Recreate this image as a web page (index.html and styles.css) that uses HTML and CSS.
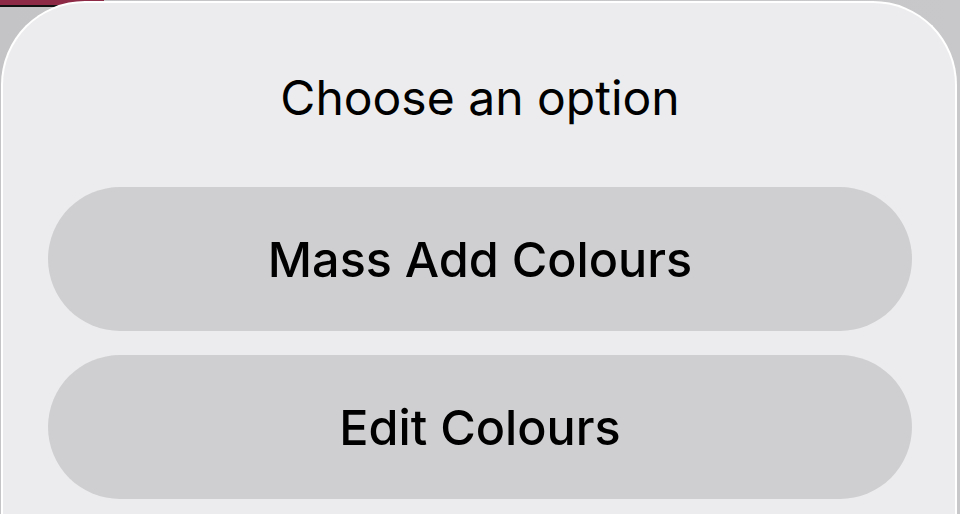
FILE: index.html
```html
<!DOCTYPE html>
<html lang="en">
<head>
<meta charset="utf-8">
<title>Choose an option</title>
<link rel="stylesheet" href="styles.css">
</head>
<body>
<div class="sheet">
  <div class="title">Choose an option</div>
  <div class="actions">
    <button class="action">Mass Add Colours</button>
    <button class="action">Edit Colours</button>
  </div>
</div>
</body>
</html>
```
FILE: styles.css
```css
html, body {
  margin: 0;
  height: 100%;
}
body {
  background-color: #c5c5c7;
  background-image:
    linear-gradient(#8d2a46, #8d2a46),
    linear-gradient(#111, #111),
    linear-gradient(90deg, #c4c4c6 0%, #c8c8ca 100%);
  background-repeat: no-repeat;
  background-size: 104px 5px, 104px 2px, 100% 100%;
  background-position: 0 0, 0 5px, 0 0;
  overflow: hidden;
  font-family: Inter, "Noto Sans", sans-serif;
  color: #000;
}
.sheet {
  box-sizing: border-box;
  margin: 1px 3px 0 1px;
  height: 513px;
  overflow: hidden;
  border: 2px solid #ffffff;
  border-bottom: none;
  border-radius: 84px 84px 0 0;
  background: #ececee;
  padding: 0 43px 0 45px;
  display: flex;
  flex-direction: column;
}
.title {
  height: 184px;
  flex: none;
  display: flex;
  align-items: center;
  justify-content: center;
  font-size: 48px;
  font-weight: 400;
  padding-top: 4px;
  box-sizing: border-box;
}
.actions {
  display: flex;
  flex-direction: column;
  gap: 24px;
  flex: none;
}
.action {
  height: 144px;
  flex: none;
  border: none;
  border-radius: 72px;
  background: #cfcfd1;
  font-family: inherit;
  font-size: 48.5px;
  font-weight: 500;
  color: #000;
  padding: 0;
}
```
